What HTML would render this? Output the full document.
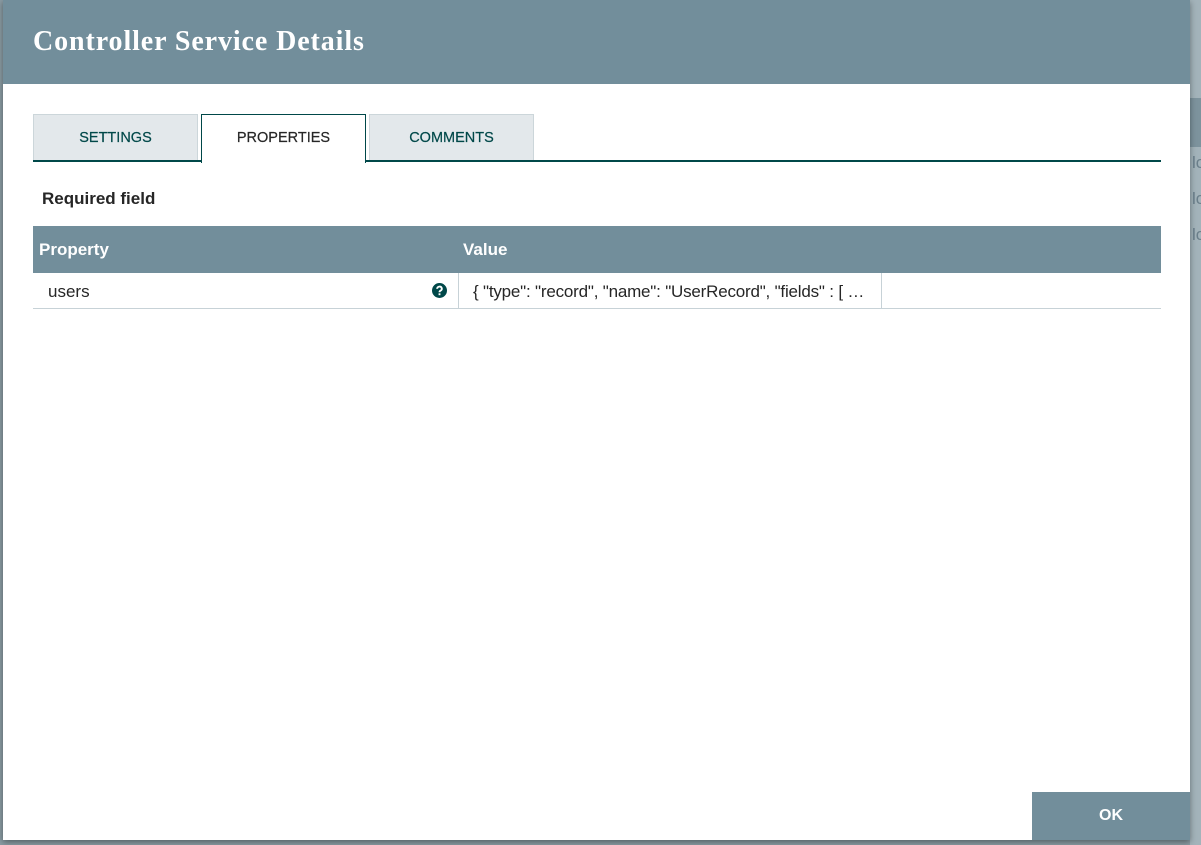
<!DOCTYPE html>
<html><head><style>
body{margin:0;width:1201px;height:845px;background:#8a9ba3;position:relative;overflow:hidden;font-family:"Liberation Sans",sans-serif}
.bgstrip{position:absolute;left:1190px;top:0;width:11px;height:845px;background:#a3b3ba}
.dlg{position:absolute;left:3px;top:0;width:1187px;height:840px;background:#fff;box-shadow:0 2px 6px rgba(0,0,0,.4)}
.hdr{height:84px;background:#728e9b;color:#fff;font-family:"Liberation Serif",serif;font-weight:bold;font-size:28px;letter-spacing:0.9px;line-height:84px;padding-left:30px}
.tab{position:absolute;top:114px;width:163px;height:46px;border:1px solid #ccd6da;background:#e3e8eb;color:#004849;font-size:14.5px;text-align:center;line-height:47px;-webkit-text-stroke:0.2px}
.tab.act{background:#fff;border:1px solid #004849;border-bottom:none;height:48px;color:#262626;z-index:2}
.line{position:absolute;left:30px;top:160px;width:1128px;height:2px;background:#004849}
.req{position:absolute;left:39px;top:189px;font-weight:bold;font-size:17px;color:#262626}
.th{position:absolute;left:30px;top:226px;width:1128px;height:47px;background:#728e9b;color:#fff;font-weight:bold;font-size:17px;line-height:47px}
.row{position:absolute;left:30px;top:273px;width:1128px;height:35px;border-bottom:1px solid #c7d2d7;font-size:17px;color:#262626;line-height:38px}
.ok{position:absolute;left:1029px;top:792px;width:158px;height:48px;background:#728e9b;color:#fff;font-weight:bold;font-size:16px;text-align:center;line-height:48px}
</style></head><body>
<div class="bgstrip"></div>
<div style="position:absolute;left:1190px;top:98px;width:11px;height:49px;background:#7d939d"></div>
<div style="position:absolute;left:1192px;top:145px;font-size:17px;color:#6b7f8a;line-height:36px">lo<br>lo<br>lo</div>
<div class="dlg">
<div class="hdr">Controller Service Details</div>
<div class="tab" style="left:30px">SETTINGS</div>
<div class="tab act" style="left:198px">PROPERTIES</div>
<div class="tab" style="left:366px">COMMENTS</div>
<div class="line"></div>
<div class="req">Required field</div>
<div class="th"><span style="position:absolute;left:6px">Property</span><span style="position:absolute;left:430px">Value</span></div>
<div class="row"><span style="position:absolute;left:15px">users</span>
<svg style="position:absolute;left:399px;top:10px" width="15" height="15" viewBox="0 0 16 16"><circle cx="8" cy="8" r="8" fill="#004849"/><path d="M5.5 6.2a2.5 2.3 0 1 1 3.6 2c-.8.4-1.1.8-1.1 1.6" stroke="#fff" stroke-width="2" fill="none"/><rect x="7" y="11" width="2" height="2" fill="#fff"/></svg>
<div style="position:absolute;left:425px;top:0;width:1px;height:35px;background:#c7d2d7"></div>
<span style="position:absolute;left:440px;letter-spacing:-0.2px">{ "type": "record", "name": "UserRecord", "fields" : [ …</span>
<div style="position:absolute;left:848px;top:0;width:1px;height:35px;background:#c7d2d7"></div>
</div>
<div class="ok">OK</div>
</div>
</body></html>
